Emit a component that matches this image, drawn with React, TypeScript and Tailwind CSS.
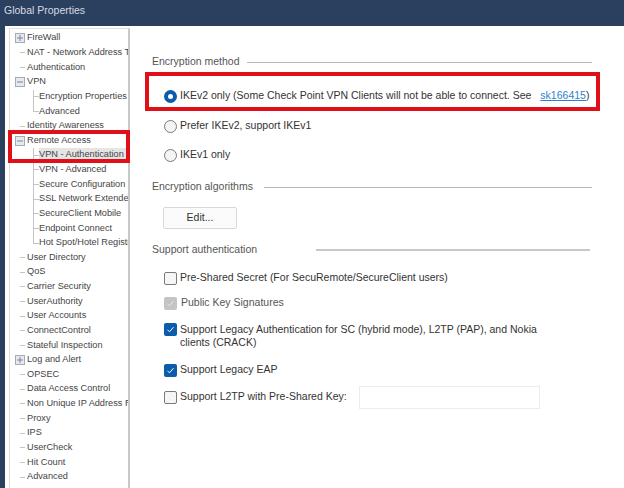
import React from 'react';

interface TreeItem {
  label: string;
  level: 0 | 1;
  box?: 'plus' | 'minus';
  last?: boolean;
  selected?: boolean;
}

const tree: TreeItem[] = [
  { label: 'FireWall', level: 0, box: 'plus' },
  { label: 'NAT - Network Address Translation', level: 0 },
  { label: 'Authentication', level: 0 },
  { label: 'VPN', level: 0, box: 'minus' },
  { label: 'Encryption Properties', level: 1 },
  { label: 'Advanced', level: 1, last: true },
  { label: 'Identity Awareness', level: 0 },
  { label: 'Remote Access', level: 0, box: 'minus' },
  { label: 'VPN - Authentication', level: 1, selected: true },
  { label: 'VPN - Advanced', level: 1 },
  { label: 'Secure Configuration Verification', level: 1 },
  { label: 'SSL Network Extender', level: 1 },
  { label: 'SecureClient Mobile', level: 1 },
  { label: 'Endpoint Connect', level: 1 },
  { label: 'Hot Spot/Hotel Registration', level: 1, last: true },
  { label: 'User Directory', level: 0 },
  { label: 'QoS', level: 0 },
  { label: 'Carrier Security', level: 0 },
  { label: 'UserAuthority', level: 0 },
  { label: 'User Accounts', level: 0 },
  { label: 'ConnectControl', level: 0 },
  { label: 'Stateful Inspection', level: 0 },
  { label: 'Log and Alert', level: 0, box: 'plus' },
  { label: 'OPSEC', level: 0 },
  { label: 'Data Access Control', level: 0 },
  { label: 'Non Unique IP Address Ranges', level: 0 },
  { label: 'Proxy', level: 0 },
  { label: 'IPS', level: 0 },
  { label: 'UserCheck', level: 0 },
  { label: 'Hit Count', level: 0 },
  { label: 'Advanced', level: 0 },
];

const TreeBox = ({ kind }: { kind: 'plus' | 'minus' }) => (
  <svg width="10" height="10" viewBox="0 0 10 10" className="shrink-0 bg-[#e6e9f0]">
    <rect x="0.5" y="0.5" width="9" height="9" fill="none" stroke="#a4aab6" />
    <path d="M2 5H8" stroke="#7d8492" />
    {kind === 'plus' && <path d="M5 2V8" stroke="#7d8492" />}
  </svg>
);

const TreeRow = ({ item }: { item: TreeItem }) => (
  <div className="flex h-[14.63px] items-center whitespace-nowrap">
    {item.level === 1 && (
      <span className={`ml-[23px] w-px shrink-0 self-start bg-[#c4c4c4] ${item.last ? 'h-[8px]' : 'h-full'}`} />
    )}
    {item.level === 1 ? (
      <span className="h-px w-[5px] shrink-0 bg-[#c4c4c4]" />
    ) : item.box ? (
      <span className="ml-[5px] mr-[2px] flex w-[10px] shrink-0">
        <TreeBox kind={item.box} />
      </span>
    ) : (
      <span className="ml-[10px] mr-[2px] h-px w-[5px] shrink-0 bg-[#c4c4c4]" />
    )}
    <span className={item.selected ? 'flex-1 bg-[#e5e5e5]' : ''}>{item.label}</span>
  </div>
);

const SectionTitle = ({ title, titleClass, lineClass }: { title: string; titleClass: string; lineClass: string }) => (
  <div className="flex h-[14px] items-center">
    <span className={`whitespace-nowrap text-[#555] ${titleClass}`}>{title}</span>
    <span className={`bg-[#b9b9b9] ${lineClass}`} />
  </div>
);

const Radio = ({ on }: { on?: boolean }) =>
  on ? (
    <span className="flex h-[13px] w-[13px] shrink-0 items-center justify-center rounded-full bg-[#0b5cad]">
      <span className="h-[5px] w-[5px] rounded-full bg-white" />
    </span>
  ) : (
    <span className="h-[13px] w-[13px] shrink-0 rounded-full border border-[#7a7a7a] bg-[#f4f4f4]" />
  );

const Check = ({ state }: { state: 'off' | 'on' | 'disabled' }) => {
  if (state === 'off') {
    return <span className="h-[13px] w-[13px] shrink-0 rounded-[2px] border border-[#7a7a7a] bg-[#f6f6f6]" />;
  }
  return (
    <span
      className={`flex h-[13px] w-[13px] shrink-0 items-center justify-center rounded-[2px] ${
        state === 'on' ? 'bg-[#0b5cad]' : 'bg-[#c4c4c4]'
      }`}
    >
      <svg width="9" height="9" viewBox="0 0 9 9" fill="none" stroke={state === 'on' ? '#ffffff' : '#e8e8e8'} strokeWidth="1">
        <path d="M1.5 4.8L3.5 6.8L7.5 2.2" />
      </svg>
    </span>
  );
};

export default function App() {
  return (
    <div className="relative h-[488px] w-[624px] overflow-hidden bg-white font-['Liberation_Sans',sans-serif] text-[10.5px] text-[#333]">
      <div className="flex h-[26px] bg-[#2b3f5e] pl-[4px] pt-[4px] text-[#d5dbe5]">
        <span className="text-[10.5px] leading-[12px]">Global Properties</span>
      </div>
      <div className="flex h-[462px]">
        <div className="w-[5px] shrink-0 bg-[#2b3f5e]" />
        <div className="w-[125px] shrink-0 pl-[4px] pt-[2px]">
          <div className="h-full overflow-hidden border-l border-r-2 border-t border-l-[#dedede] border-r-[#c8c8c8] border-t-[#dedede] pt-[2px] text-[9.2px] text-[#444]">
            {tree.map((item, i) => (
              <TreeRow key={i} item={item} />
            ))}
          </div>
        </div>
        <div className="flex-1 pl-[22px] pt-[29px]">
          <SectionTitle title="Encryption method" titleClass="w-[95px]" lineClass="h-px w-[345px]" />
          <div className="mt-[20px] flex h-[14px] items-center gap-[3px] whitespace-nowrap pl-[12px]">
            <Radio on />
            <span>IKEv2 only (Some Check Point VPN Clients will not be able to connect. See</span>
            <span className="ml-[6px]">
              <span className="text-[#2f7fd0] underline">sk166415</span>)
            </span>
          </div>
          <div className="mt-[16px] flex h-[14px] items-center gap-[3px] pl-[12px]">
            <Radio />
            <span>Prefer IKEv2, support IKEv1</span>
          </div>
          <div className="mt-[15px] flex h-[14px] items-center gap-[3px] pl-[12px]">
            <Radio />
            <span>IKEv1 only</span>
          </div>
          <div className="mt-[18px]">
            <SectionTitle title="Encryption algorithms" titleClass="w-[112px]" lineClass="h-px w-[328px]" />
          </div>
          <button className="ml-[11px] mt-[13px] block h-[22px] w-[74px] rounded-[2px] border border-[#d8d8d8] bg-[#fbfbfb] text-[#333]">
            Edit...
          </button>
          <div className="mt-[14px]">
            <SectionTitle title="Support authentication" titleClass="w-[164px]" lineClass="h-[2px] w-[274px] opacity-80" />
          </div>
          <div className="mt-[14px] flex h-[14px] items-center gap-[3px] pl-[12px]">
            <Check state="off" />
            <span>Pre-Shared Secret (For SecuRemote/SecureClient users)</span>
          </div>
          <div className="mt-[11px] flex h-[14px] items-center gap-[4px] pl-[12px] text-[#555]">
            <Check state="disabled" />
            <span>Public Key Signatures</span>
          </div>
          <div className="mt-[13px] flex gap-[3px] pl-[12px]">
            <Check state="on" />
            <span className="w-[365px] leading-[13px]">
              Support Legacy Authentication for SC (hybrid mode), L2TP (PAP), and Nokia clients (CRACK)
            </span>
          </div>
          <div className="mt-[14px] flex h-[14px] items-center gap-[3px] pl-[12px]">
            <Check state="on" />
            <span>Support Legacy EAP</span>
          </div>
          <div className="mt-[13px] flex h-[14px] items-center pl-[12px]">
            <Check state="off" />
            <span className="ml-[3px] w-[179px] whitespace-nowrap">Support L2TP with Pre-Shared Key:</span>
            <span className="h-[23px] w-[181px] shrink-0 border border-[#ececec] bg-white" />
          </div>
        </div>
      </div>
      <div className="absolute left-[8px] top-[130px] h-[33px] w-[122px] border-[4px] border-[#e01019]" />
      <div className="absolute left-[145px] top-[72px] h-[39px] w-[455px] border-[4px] border-[#e01019]" />
    </div>
  );
}
